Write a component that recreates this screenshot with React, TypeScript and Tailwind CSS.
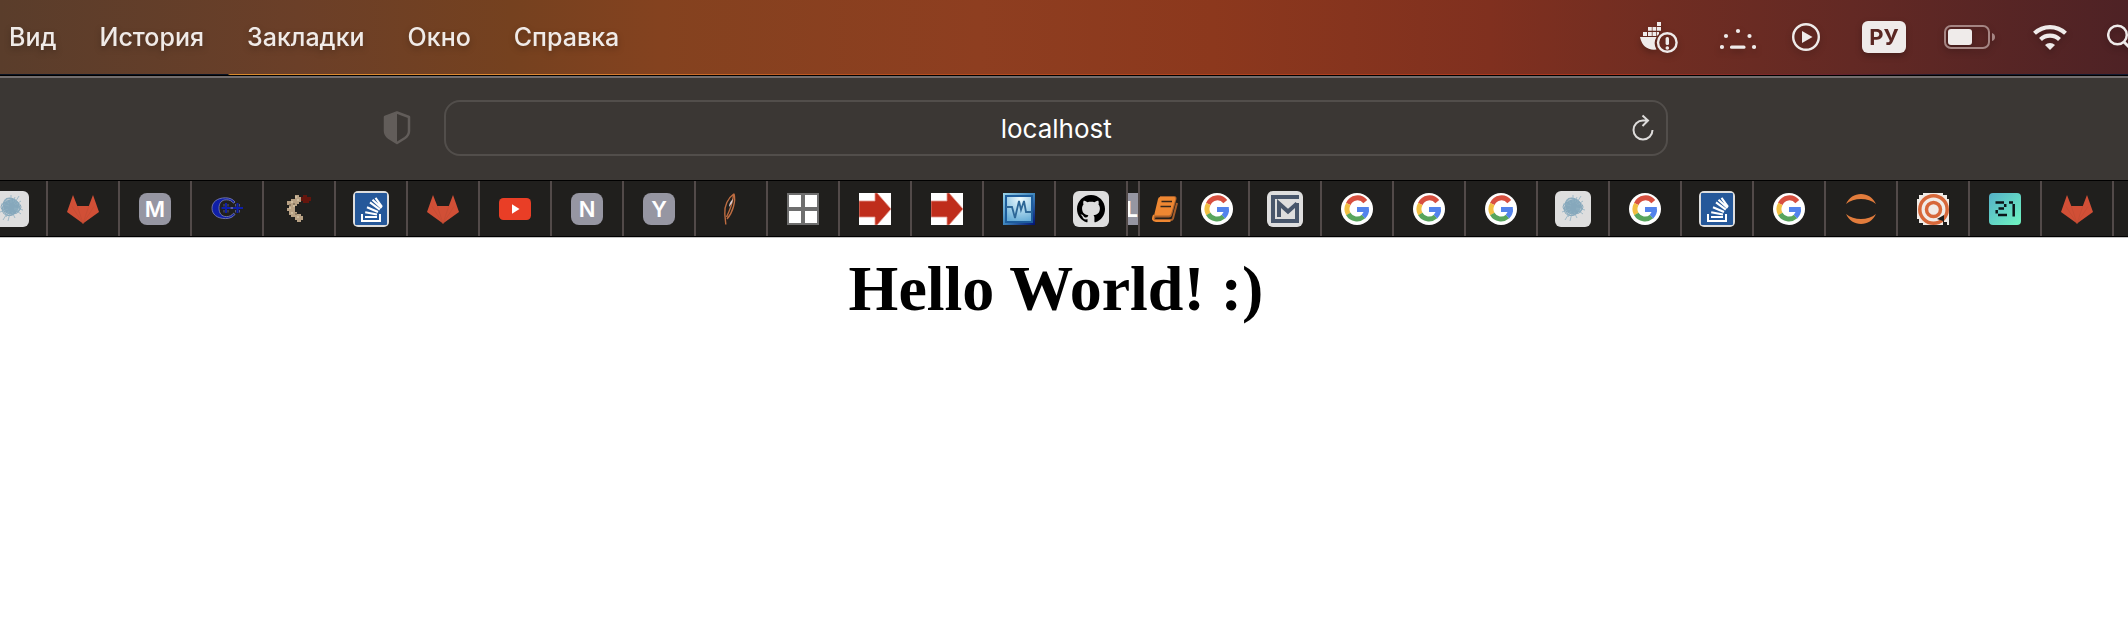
import React from "react";

type TabProps = { label: string; size?: string; children: React.ReactNode };

function Tab({ label, size = "w-[72px] justify-center", children }: TabProps) {
  return (
    <button
      type="button"
      aria-label={label}
      className={`flex h-[55px] shrink-0 items-center overflow-hidden border-r-2 border-[#524a49] pt-px ${size}`}
    >
      {children}
    </button>
  );
}

const iconClass = "block h-8 w-8 shrink-0";
const tileClass = "block h-9 w-9 shrink-0";

function GitLab() {
  return (
    <svg viewBox="0 0 32 32" className={iconClass}>
      <path d="M16 30.500L0 19 6 2l4.300 11h11.500L26 2l6 17z" fill="#d14f36" />
      <path d="M16 30.500L10.300 13M16 30.500L21.800 13M16 30.500L5 13.500M16 30.500L27 13.500" stroke="#bd4a33" strokeWidth=".5" fill="none" />
    </svg>
  );
}

function Letter({ children }: { children: string }) {
  return (
    <span className="flex h-8 w-8 shrink-0 items-center justify-center rounded-lg bg-[#9696a2] font-[Inter] text-[22px] leading-8 font-semibold text-white">
      {children}
    </span>
  );
}

function Google() {
  return (
    <svg viewBox="0 0 32 32" className={iconClass}>
      <circle cx="16" cy="16" r="16" fill="#fff" />
      <g fill="none" strokeWidth="5">
        <path d="M24.300 8.600A10 10 0 0 0 7.300 11" stroke="#d85040" />
        <path d="M7.400 10.900a10 10 0 0 0 0 10.200" stroke="#f2bf42" />
        <path d="M7.300 21a10 10 0 0 0 15.300 2.500" stroke="#58a55c" />
        <path d="M22.500 23.600a9.500 9.500 0 0 0 3-7.300" stroke="#5383ec" />
      </g>
      <path d="M16 14h11.800q.3 2.500-.2 5H16z" fill="#5383ec" />
    </svg>
  );
}

function StackOverflow() {
  return (
    <svg viewBox="0 0 36 36" className={tileClass}>
      <rect width="36" height="36" rx="5" fill="#dedede" />
      <rect x="2" y="2" width="32" height="32" rx="1" fill="#25589a" />
      <path d="M9 23v7h18v-7" fill="none" stroke="#fff" strokeWidth="2" />
      <path d="M12 26h12M12.200 21.200l11.800 2.300M14 16.200l11 4.800M17 11.400l9.800 7.200M19.500 8.800l9 8.200M22.500 6.800l6.500 9" stroke="#fff" strokeWidth="2.100" />
    </svg>
  );
}

function Splat() {
  return (
    <svg viewBox="0 0 36 36" className={tileClass}>
      <rect width="36" height="36" rx="6" fill="#dedede" />
      <circle cx="18" cy="16" r="7.500" fill="#86a8bc" />
      <g fill="none" stroke="#86a8bc" strokeWidth="1">
        <ellipse cx="18" cy="16" rx="10" ry="6" />
        <ellipse cx="17" cy="16" rx="7" ry="8.500" />
        <ellipse cx="18.500" cy="15" rx="9" ry="7" transform="rotate(40 18.500 15)" />
        <ellipse cx="17.500" cy="16.500" rx="9" ry="7" transform="rotate(-40 17.500 16.500)" />
      </g>
      <path d="M12 8l4 5M18 4v8M26 5l-5 8M22 6l-2 5M28 10l-6 4M30 19l-8-2M28 23l-7-5M22 27l-3-6M15 30l2-8M10 29l5-8M13 26l3-6M7 21l8-3M8 13l8 2M27 20l-6-3" stroke="#8fb0c2" strokeWidth=".8" />
    </svg>
  );
}

function CPlusPlus() {
  return (
    <svg viewBox="0 0 32 32" className={iconClass}>
      <path
        d="M24 9C22 6.200 18.500 4.800 14.500 4.800 6 4.800 1 9.200 1 15.200s5 10.400 13.500 10.400c4 0 7.500-1.400 9.500-4.200l-1.500-1.200c-1.500 2.200-4 3.400-7 3.400-5 0-7.500-3.400-7.500-8.400s2.500-8.400 7.500-8.400c3 0 5.500 1.200 7 3.400z"
        fill="#0f1fa8"
        stroke="#8486b4"
        strokeWidth=".8"
      />
      <path d="M15 10v10M10.500 15h9M26.500 10v10M22 15h10" stroke="#0f1fa8" strokeWidth="2" />
      <path d="M19.500 15H22" stroke="#5c60a8" strokeWidth="2" />
      <path d="M13 11v2.500M17 11v2.500M13 17v2.500M17 17v2.500M24.500 11v2.500M28.500 11v2.500M24.500 17v2.500M28.500 17v2.500" stroke="#6b6d9c" strokeWidth=".7" />
    </svg>
  );
}

function Claw() {
  return (
    <svg viewBox="0 0 32 32" className={iconClass}>
      <path d="M12 2h4v2h2v5h-2v2h-2v2h-2v6h2v2h4v2h2v4h-2v2h-4v-2h-2v-3H8v-2H6v-4H4v-3h2v-3H4v-4h4V6h4z" fill="#b8a184" />
      <path d="M12 3h2v2h-2zM8 8h2v2H8zM14 6h2v2h-2zM6 14h2v2H6zM10 12h2v2h-2zM8 19h2v2H8zM14 23h2v2h-2z" fill="#cdbb9e" />
      <path d="M10 10h2v2h-2zM12 20h2v2h-2zM6 11h2v2H6z" fill="#8a7962" />
      <path d="M18 4h2V2h4v2h4v4h-2v2h-6V8h-2z" fill="#64150d" />
    </svg>
  );
}

function YouTube() {
  return (
    <svg viewBox="0 0 32 32" className={iconClass}>
      <rect y="5" width="32" height="22" rx="4.500" fill="#e93e26" />
      <path d="M13 11.200v9.600l7.500-4.800z" fill="#fff" />
    </svg>
  );
}

function Feather() {
  return (
    <svg viewBox="0 0 32 32" className={iconClass}>
      <path d="M19 .8C13 5 9 13 9.800 21l1 10.500M19 .8c2 7-1 18.500-7 25.200M18.500 2c-1 9-4 16-7 22" fill="none" stroke="#bd6c41" strokeWidth="1.400" />
      <path d="M18 6c-3 3-4 5-4 8l3-4z" fill="#d9cfd5" />
    </svg>
  );
}

function Windows() {
  return (
    <svg viewBox="0 0 32 32" className={iconClass}>
      <rect width="32" height="32" fill="#6e6e6e" />
      <path d="M2 2h12v12H2zM18 2h12v12H18zM2 18h12v12H2zM18 18h12v12H18z" fill="#fff" />
    </svg>
  );
}

function Arrow() {
  return (
    <svg viewBox="0 0 32 32" className={iconClass}>
      <rect width="32" height="32" fill="#fff" />
      <path d="M0 8h16V0h2l14 16-14 16h-2v-8H0z" fill="#bf2d1b" stroke="#e3958c" strokeWidth=".8" />
    </svg>
  );
}

function Pulse() {
  return (
    <svg viewBox="0 0 32 32" className={iconClass}>
      <defs>
        <linearGradient id="pulseFrame" x1="0" y1="0" x2="1" y2="1">
          <stop offset="0" stopColor="#9bd4ea" />
          <stop offset=".5" stopColor="#3f86bd" />
          <stop offset="1" stopColor="#00106f" />
        </linearGradient>
        <radialGradient id="pulseScreen" cx=".55" cy=".1" r=".9">
          <stop offset="0" stopColor="#eefcff" />
          <stop offset="1" stopColor="#68aed8" />
        </radialGradient>
      </defs>
      <rect width="32" height="32" fill="url(#pulseFrame)" />
      <rect x="3" y="3" width="26" height="26" fill="url(#pulseScreen)" stroke="#1d5d9c" strokeWidth="2" />
      <path d="M3 14h6l3 11 4-17 2 9 3-9 2 11h6" fill="none" stroke="#2d6797" strokeWidth="1.800" />
    </svg>
  );
}

function GitHub() {
  return (
    <svg viewBox="0 0 36 36" className={tileClass}>
      <rect width="36" height="36" rx="6" fill="#dedede" />
      <g transform="translate(4 3.700) scale(1.167)">
        <path
          fill="#000"
          d="M12 .297c-6.630 0-12 5.373-12 12 0 5.303 3.438 9.800 8.205 11.385.6.113.82-.258.82-.577 0-.285-.01-1.040-.015-2.040-3.338.724-4.042-1.610-4.042-1.610C4.422 18.070 3.633 17.700 3.633 17.700c-1.087-.744.084-.729.084-.729 1.205.084 1.838 1.236 1.838 1.236 1.070 1.835 2.809 1.305 3.495.998.108-.776.417-1.305.76-1.605-2.665-.3-5.466-1.332-5.466-5.930 0-1.310.465-2.380 1.235-3.220-.135-.303-.54-1.523.105-3.176 0 0 1.005-.322 3.300 1.230.96-.267 1.980-.399 3-.405 1.020.006 2.040.138 3 .405 2.280-1.552 3.285-1.230 3.285-1.230.645 1.653.24 2.873.12 3.176.765.84 1.230 1.910 1.230 3.220 0 4.610-2.805 5.625-5.475 5.920.42.36.81 1.096.81 2.220 0 1.606-.015 2.896-.015 3.286 0 .315.21.69.825.57C20.565 22.092 24 17.592 24 12.297c0-6.627-5.373-12-12-12"
        />
      </g>
    </svg>
  );
}

function Book() {
  return (
    <svg viewBox="0 0 26 32" className="block h-8 w-[26px] shrink-0">
      <path d="M8 4h14q2 0 1.500 2L19 22q-.5 1.500-2 1.500H4q-2 0-2 1.800T4 27h15q1.500 0 2-1.500L25 10" fill="none" stroke="#a85f2b" strokeWidth="2" />
      <path d="M8 4h14q2 0 1.500 2L19 21q-.5 1.800-2 1.800H2L6 6q.5-2 2-2z" fill="#ee8732" />
      <path d="M2 22q-3 6 2 6h14.500" fill="none" stroke="#ee8732" strokeWidth="1.800" />
      <path d="M9.500 8.500H20M8.500 13.500H19" stroke="#33261c" strokeWidth="1.500" />
    </svg>
  );
}

function MTile() {
  return (
    <svg viewBox="0 0 36 36" className={tileClass}>
      <rect width="36" height="36" rx="6" fill="#dedede" />
      <path d="M32 6H6v24h24V12" fill="none" stroke="#48566b" strokeWidth="4" />
      <path d="M12 26V12.500l9 8 9-8" fill="none" stroke="#48566b" strokeWidth="4" />
    </svg>
  );
}

function Jupyter() {
  return (
    <svg viewBox="0 0 32 32" className={iconClass}>
      <path d="M1 11C4 4.500 9.500 1 16 1s12 3.500 15 10C27 7.500 21.500 6 16 6S5 7.500 1 11zM1 21c4 3.500 9.500 5 15 5s11-1.500 15-5c-3 6.500-8.500 10-15 10S4 27.500 1 21z" fill="#e27c3c" />
    </svg>
  );
}

function Target() {
  return (
    <svg viewBox="0 0 32 32" className={iconClass}>
      <path d="M6 0h20v2h4v4h2v26H6v-2H2v-4H0V6h2V2h4z" fill="#f1ece8" />
      <g fill="none" stroke="#d7683a" strokeWidth="3.500">
        <circle cx="16.500" cy="16.500" r="13.700" />
        <circle cx="16.500" cy="16.500" r="7" />
      </g>
      <path d="M20 26l7-4v7h3v3h-4v-4z" fill="#1f1d1b" />
    </svg>
  );
}

function TwentyOne() {
  return (
    <svg viewBox="0 0 32 32" className={iconClass}>
      <defs>
        <linearGradient id="schoolTile" x1="0" y1="0" x2="1" y2="1">
          <stop offset="0" stopColor="#55b1c9" />
          <stop offset="1" stopColor="#6ff5c0" />
        </linearGradient>
      </defs>
      <rect width="32" height="32" rx="4" fill="url(#schoolTile)" />
      <path d="M6.500 9.500H15M16.200 11v3M9.500 15.500H15M7.700 17v3.500M9 22h9M20 9.500h4M24.700 11v12.500" fill="none" stroke="#0c1518" strokeWidth="2.500" />
    </svg>
  );
}

function StatusIcons() {
  return (
    <div className="flex shrink-0 items-center text-[#efebea] drop-shadow-[0_3px_3px_rgba(0,0,0,0.25)]">
      <svg viewBox="0 0 38 32" className="mr-[42px] h-8 w-[38px]" aria-label="Docker">
        <g fill="currentColor">
          <path d="M17 1h4v4h-4zM8 6h3.800v3.800H8zM12.500 6h3.800v3.800h-3.800zM17 6h4v3.800h-4zM3 11h4v4H3zM8 11h3.800v4H8zM12.500 11h3.800v4h-3.800zM17 11h2v2l-2 2z" />
          <path d="M0 16h16.500a12 12 0 0 0 0 12.500Q3 30 0 16z" />
          <rect x="25.600" y="16" width="3.400" height="8" rx="1.500" />
          <circle cx="27.300" cy="27" r="1.800" />
        </g>
        <circle cx="27.300" cy="21.500" r="9.300" fill="none" stroke="currentColor" strokeWidth="2.400" />
      </svg>
      <svg viewBox="0 0 36 32" className="mr-9 h-8 w-9" aria-label="Activity">
        <g fill="currentColor">
          <circle cx="2" cy="26" r="2.100" />
          <circle cx="6" cy="15" r="2.100" />
          <circle cx="18" cy="10" r="2.100" />
          <circle cx="29.500" cy="15" r="2.100" />
          <circle cx="34" cy="26" r="2.100" />
          <rect x="10" y="24.500" width="15.500" height="3.200" rx="1.500" />
        </g>
      </svg>
      <svg viewBox="0 0 28 32" className="mr-[42px] h-8 w-7" aria-label="Now playing">
        <circle cx="14" cy="16" r="12.800" fill="none" stroke="currentColor" strokeWidth="2.400" />
        <path d="M10 10v12l10.500-6z" fill="currentColor" />
      </svg>
      <span className="mr-[38px] flex h-8 w-11 items-center justify-center rounded-md bg-[#efebea] font-[Inter] text-[22px] font-bold text-[#5a2723]">
        РУ
      </span>
      <svg viewBox="0 0 52 32" className="mr-[37px] h-8 w-[52px]" aria-label="Battery">
        <rect x="1" y="5" width="44" height="22" rx="6" fill="none" stroke="#a58583" strokeWidth="2" />
        <rect x="4" y="8" width="24" height="16" rx="3" fill="currentColor" />
        <path d="M48 12v8q3-1 3-4t-3-4z" fill="#a58583" />
      </svg>
      <svg viewBox="0 0 34 32" className="mr-10 h-8 w-[34px]" aria-label="Wi-Fi">
        <path d="M1.500 12.300a22.500 22.500 0 0 1 31 0M7.500 18.500a13.800 13.800 0 0 1 19 0" fill="none" stroke="currentColor" strokeWidth="4.200" />
        <path d="M17 29l-5-5a7.200 7.200 0 0 1 10 0z" fill="currentColor" />
      </svg>
      <svg viewBox="0 0 28 32" className="-mr-[7px] h-8 w-7" aria-label="Search">
        <circle cx="10.500" cy="14" r="9.300" fill="none" stroke="currentColor" strokeWidth="2.500" />
        <path d="M17 21l8 8" stroke="currentColor" strokeWidth="3" />
      </svg>
    </div>
  );
}

const menu = ["Вид", "История", "Закладки", "Окно", "Справка"];

export default function App() {
  return (
    <div className="min-h-screen overflow-hidden bg-white">
      <header className="flex h-[74px] items-center justify-between bg-[linear-gradient(90deg,#5a3d2b_0%,#6b3f28_14%,#75411f_24%,#84421f_31%,#8e3e20_46%,#8c381d_57%,#80301f_70%,#702d22_78%,#632924_87%,#4e2225_100%)] pl-[9px]">
        <nav className="flex gap-[43px] font-[Inter] text-[25px] leading-8 font-medium text-[#f0ebe8]">
          {menu.map((m) => (
            <button key={m} type="button" className="whitespace-nowrap drop-shadow-[0_3px_3px_rgba(0,0,0,0.25)]">
              {m}
            </button>
          ))}
        </nav>
        <StatusIcons />
      </header>
      <div className="h-px bg-[linear-gradient(90deg,#0b1424_0%,#0b1424_10.700%,#d98a2c_10.800%,#e08a34_25%,#b8501f_40%,#a8341f_76%,#6b2430_86%,#141a30_92%)]" />
      <div className="h-px bg-black" />
      <div className="h-0.5 bg-[#736e6e]" />

      <div className="flex h-[102px] items-center bg-[#3b3734] pr-[21.600%] pb-0.5 pl-[18%]">
        <button type="button" aria-label="Privacy report" className="mr-[33px] shrink-0">
          <svg viewBox="0 0 28 34" className="h-[34px] w-7">
            <path d="M14 1.500L26 6v14q0 4-4 7l-8 5-8-5q-4-3-4-7V6z" fill="none" stroke="#625d5a" strokeWidth="2.500" strokeLinejoin="round" />
            <path d="M14 1.500v30.500l-8-5q-4-3-4-7V6z" fill="#625d5a" />
          </svg>
        </button>
        <div className="flex h-14 grow items-center rounded-2xl border-2 border-[#524e4b] pl-[34px]">
          <input
            aria-label="Address"
            defaultValue="localhost"
            className="min-w-0 grow bg-transparent text-center font-[Inter] text-[26px] text-white outline-none"
          />
          <button type="button" aria-label="Reload" className="mr-3 shrink-0">
            <svg viewBox="0 0 22 28" className="h-7 w-[22px] fill-none stroke-[#dedcdb] stroke-2">
              <path d="M20.500 16a9.500 9.500 0 1 1-9.500-9.500h4.500M10.500 1.500l5.500 5-5.500 5.500" />
            </svg>
          </button>
        </div>
      </div>

      <div className="flex overflow-hidden border-y border-black bg-[#201f1d]">
        <div className="-ml-6 flex shrink-0">
          <Tab label="Notes"><Splat /></Tab>
          <Tab label="GitLab"><GitLab /></Tab>
          <Tab label="M"><Letter>M</Letter></Tab>
          <Tab label="C++"><CPlusPlus /></Tab>
          <Tab label="Claw"><Claw /></Tab>
          <Tab label="Stack Overflow"><StackOverflow /></Tab>
          <Tab label="GitLab"><GitLab /></Tab>
          <Tab label="YouTube"><YouTube /></Tab>
          <Tab label="N"><Letter>N</Letter></Tab>
          <Tab label="Y"><Letter>Y</Letter></Tab>
          <Tab label="Apache"><Feather /></Tab>
          <Tab label="Windows"><Windows /></Tab>
          <Tab label="Arrow"><Arrow /></Tab>
          <Tab label="Arrow"><Arrow /></Tab>
          <Tab label="Monitor"><Pulse /></Tab>
          <Tab label="GitHub"><GitHub /></Tab>
          <Tab label="L" size="w-3">
            <span className="flex h-8 w-[10px] items-center justify-end overflow-hidden bg-[#9696a2] font-[Inter] text-[22px] leading-8 font-bold text-white">
              L
            </span>
          </Tab>
          <Tab label="Book" size="w-[42px] pl-3"><Book /></Tab>
          <Tab label="Google" size="w-[68px] justify-center pl-1"><Google /></Tab>
          <Tab label="M"><MTile /></Tab>
          <Tab label="Google"><Google /></Tab>
          <Tab label="Google"><Google /></Tab>
          <Tab label="Google"><Google /></Tab>
          <Tab label="Notes"><Splat /></Tab>
          <Tab label="Google"><Google /></Tab>
          <Tab label="Stack Overflow"><StackOverflow /></Tab>
          <Tab label="Google"><Google /></Tab>
          <Tab label="Jupyter"><Jupyter /></Tab>
          <Tab label="Target"><Target /></Tab>
          <Tab label="21"><TwentyOne /></Tab>
          <Tab label="GitLab"><GitLab /></Tab>
        </div>
      </div>

      <main className="border-t border-[#c4c4c4] pt-[15px] pr-4">
        <h1 className="text-center font-['Liberation_Serif'] text-[64px] leading-[72px] font-bold text-black">
          Hello World! :)
        </h1>
      </main>
    </div>
  );
}
